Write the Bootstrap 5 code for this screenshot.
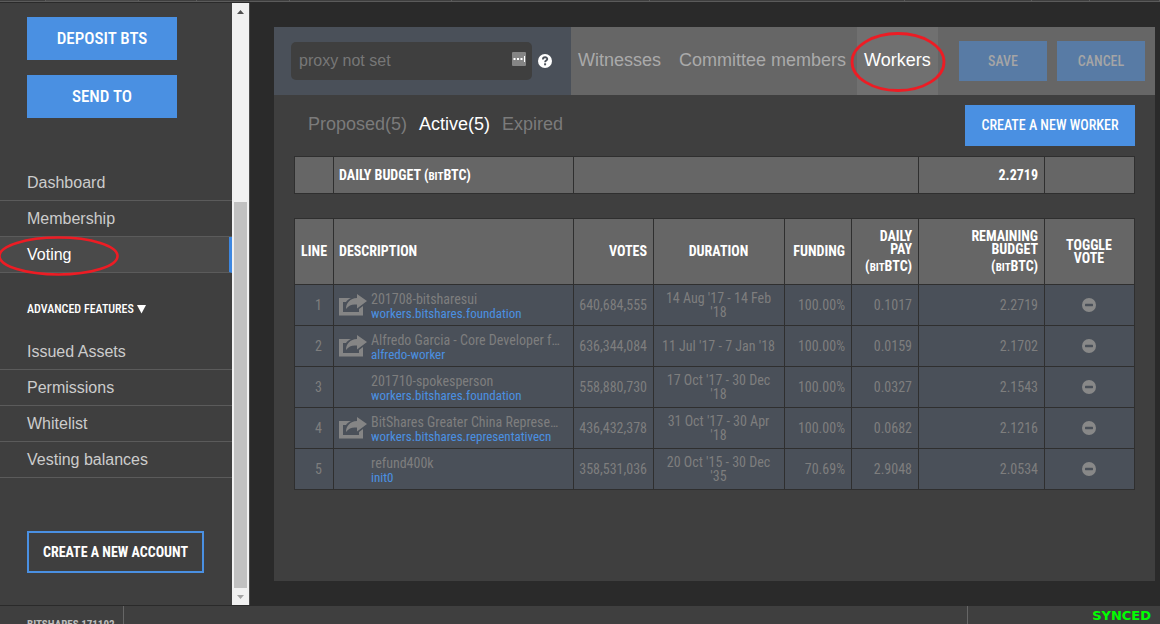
<!DOCTYPE html>
<html lang="en">
<head>
<meta charset="utf-8">
<meta name="viewport" content="width=device-width, initial-scale=1">
<title>BitShares - Voting</title>
<link href="https://cdn.jsdelivr.net/npm/bootstrap@5.3.0/dist/css/bootstrap.min.css" rel="stylesheet">
<style>
:root{--cond:"Roboto Condensed","Liberation Sans Narrow",Roboto,sans-serif;--blue:#4a90e2;--panel:#3f3f3f}
body{background:#2a2a2a;color:#ccc;font-family:"Liberation Sans",Arial,sans-serif;font-size:16px;line-height:20px}
a{text-decoration:none}
.btn{--bs-btn-border-radius:0;--bs-btn-border-width:0;font-family:var(--cond);white-space:nowrap}
.topstrip{height:3px;background:var(--panel);border-bottom:1px solid #2a2a2a}
.topstrip div{border-right:1px solid #5b5b5b;border-bottom:1px solid #5b5b5b}
.topstrip .on{background:#4a4a4a}
.side{width:232px;background:var(--panel)}
.side-actions{gap:15px;padding:14px 27px 47px}
.btn-act{width:150px;height:43px;background:var(--blue);color:#fff;font-size:17px;font-weight:500}
.btn-act:hover{background:#3b82d6;color:#fff}
.sidelink{display:block;height:36px;padding:8px 27px 7px;color:#ccc;border-bottom:1px solid #5b5b5b}
.sidelink.on{background:#4a4a4a;color:#fff;border-right:3px solid #3d87e0}
.advanced{padding:26px 27px 15px}
.btn-adv{color:#fff;font-size:12px;font-weight:500;line-height:20px}
.account{padding:53px 27px 0}
.btn-new{width:177px;height:42px;border:2px solid var(--blue);color:#fff;font-size:14px;font-weight:700;padding:0}
.sbar{width:18px;background:#f1f1f1;border-right:1px solid #4a4a4a}
.sbar .arrow{height:17px}
.sbar .track{flex:8 0 0}
.sbar .thumb{flex:17 0 0;width:13px;background:#c1c1c1}
.stage{padding:24px 5px 24px 24px}
.panel{background:var(--panel)}
.bar{background:#666}
.proxy{width:297px;background:#4a5059;padding:0 19px 0 17px;gap:6px}
.proxy input{height:38px;background:var(--panel);border:0;border-radius:5px;color:#ccc;font-size:16px;padding:0 36px 0 8px}
.proxy input::placeholder{color:#777}
.proxy input:focus{background:var(--panel);color:#ccc}
.pwd{right:6px;top:10px}
.tabs{gap:4px}
.tabs a{padding:23px 7px 25px;font-size:18px;color:#aaa;white-space:nowrap}
.tabs a.on{background:#707070;color:#fff}
.bar-actions{gap:10px;padding-right:10px}
.btn-off{width:88px;height:40px;font-size:14px;font-weight:500}
.btn-off:disabled{background:#587ba5;color:#a5a5a5;opacity:1}
.workers{padding:10px 20px}
.btn-worker{width:170px;height:41px;background:var(--blue);color:#fff;font-size:14px;font-weight:500;padding:0}
.filters{gap:12px;font-size:18px;padding:9px 0 0 14px}
.filters a{color:#7b7b7b}
.filters a.on{color:#fff}
.grid{table-layout:fixed;width:100%;margin-top:10px;border-collapse:collapse;font-family:var(--cond);font-size:14px;line-height:14px}
.grid + .grid{margin-top:24px}
.grid th,.grid td{border:1px solid #2f2f2f;padding:0 6px 0 5px;vertical-align:middle}
.grid th{background:#666;color:#fff;font-weight:700;line-height:13px}
.grid td{background:#4a5059;color:#7e7e7e;height:41px}
.grid td.line{padding-right:11px}
.grid .sum th{height:37px}
.grid .heads th{height:66px}
.c1{width:39px}.c3{width:80px}.c4{width:131px}.c5,.c6{width:67px}.c7{width:126px}.c8{width:90px}.cwide{width:345px}
.unit small{font-size:11px;line-height:1}
div.unit{padding-top:4px}
.ico{width:28px}
.desc a{color:var(--blue);font-size:13px}
.desc-text{padding-top:2px}
.name{line-height:16px}
.toggle{background:none;border:0;padding:0;line-height:0}
.ring{pointer-events:none}
.ring-side{left:-1px;top:-1px}
.ring-tab{left:-7px;top:4px}
.foot{height:18px;margin-top:1px;background:var(--panel);box-shadow:0 -1px #2a2a2a}
.ver{width:124px;padding:9px 0 0 27px;font-family:var(--cond);font-weight:700;font-size:11px;border-right:1px solid #666;color:#bbb;white-space:nowrap}
.sync{width:193px;border-left:1px solid #666;color:#0f0;font-family:"DejaVu Sans",sans-serif;font-size:13px;font-weight:700;padding-right:9px}
</style>
</head>
<body>
<div class="d-flex flex-column vh-100 overflow-hidden">
  <div class="topstrip d-flex flex-shrink-0">
    <div style="width:4%"></div><div class="on" style="width:8%"></div><div style="width:5%"></div><div style="width:8%"></div><div style="width:14%"></div><div style="width:17%"></div><div style="width:22%"></div><div style="width:11%"></div><div style="width:5%"></div><div class="flex-fill"></div>
  </div>
  <div class="d-flex flex-fill overflow-hidden">
    <aside class="side flex-shrink-0 d-flex flex-column overflow-hidden">
      <div class="side-actions d-flex flex-column align-items-start">
        <button class="btn btn-act" type="button">DEPOSIT BTS</button>
        <button class="btn btn-act" type="button">SEND TO</button>
      </div>
      <nav>
        <a class="sidelink" href="#">Dashboard</a>
        <a class="sidelink" href="#">Membership</a>
        <div class="position-relative">
          <a class="sidelink on" href="#">Voting</a>
          <svg class="ring ring-side position-absolute" width="121" height="41" fill="none" stroke="#ed1c24" stroke-width="2.6"><ellipse cx="59.500" cy="20" rx="59" ry="18.500"/></svg>
        </div>
      </nav>
      <div class="advanced"><button class="btn btn-adv p-0 d-flex align-items-center" type="button">ADVANCED FEATURES&nbsp;<svg width="9" height="9" viewBox="0 0 9 9"><path d="M0 0h9L4.500 8.500z" fill="#fff"/></svg></button></div>
      <nav>
        <a class="sidelink" href="#">Issued Assets</a>
        <a class="sidelink" href="#">Permissions</a>
        <a class="sidelink" href="#">Whitelist</a>
        <a class="sidelink" href="#">Vesting balances</a>
      </nav>
      <div class="account"><button class="btn btn-new" type="button">CREATE A NEW ACCOUNT</button></div>
    </aside>
    <div class="sbar flex-shrink-0 d-flex flex-column align-items-center">
      <div class="arrow d-flex align-items-center"><svg width="7" height="4"><path d="M0 4 3.500 0 7 4z" fill="#505050"/></svg></div>
      <div class="track"></div>
      <div class="thumb"></div>
      <div class="arrow d-flex align-items-center"><svg width="7" height="4"><path d="M0 0 3.500 4 7 0z" fill="#a3a3a3"/></svg></div>
    </div>
    <main class="stage flex-fill d-flex">
      <div class="panel flex-fill">
        <div class="bar d-flex align-items-stretch">
          <div class="proxy d-flex align-items-center flex-shrink-0">
            <div class="position-relative flex-fill">
              <input class="form-control shadow-none" type="text" aria-label="Proxy" placeholder="proxy not set">
              <svg class="pwd position-absolute" width="14" height="14"><rect width="14" height="14" rx="1" fill="#858585"/><path d="M1.500 6h2v2h-2zM5 6h2v2H5zM8.500 6h2v2h-2zM12 4h1v6h-1z" fill="#fff"/></svg>
            </div>
            <svg class="flex-shrink-0" width="14" height="14" viewBox="0 0 14 14"><circle cx="7" cy="7" r="7" fill="#fff"/><path d="M4.900 5.500c0-3 4.400-2.900 4.400-.4 0 1.500-2.200 1.500-2.200 3.100" fill="none" stroke="#4a5059" stroke-width="1.800"/><path d="M6.100 9.300h2v2h-2z" fill="#4a5059"/></svg>
          </div>
          <nav class="tabs d-flex">
            <a href="#">Witnesses</a>
            <a href="#">Committee members</a>
            <div class="position-relative d-flex">
              <a class="on" href="#">Workers</a>
              <svg class="ring ring-tab position-absolute" width="96" height="62" fill="none" stroke="#ed1c24" stroke-width="2.800"><ellipse cx="48" cy="31" rx="46" ry="28.500"/></svg>
            </div>
          </nav>
          <div class="bar-actions ms-auto d-flex align-items-center">
            <button class="btn btn-off" type="button" disabled>SAVE</button>
            <button class="btn btn-off" type="button" disabled>CANCEL</button>
          </div>
        </div>
        <div class="workers">
          <div class="d-flex justify-content-between">
            <nav class="filters d-flex"><a href="#">Proposed(5)</a><a class="on" href="#">Active(5)</a><a href="#">Expired</a></nav>
            <button class="btn btn-worker" type="button">CREATE A NEW WORKER</button>
          </div>
          <table class="grid">
            <colgroup><col class="c1"><col><col class="cwide"><col class="c7"><col class="c8"></colgroup>
            <tr class="sum"><th></th><th>DAILY BUDGET <span class="unit">(<small>BIT</small>BTC)</span></th><th></th><th class="text-end">2.2719</th><th></th></tr>
          </table>
          <table class="grid">
            <colgroup><col class="c1"><col><col class="c3"><col class="c4"><col class="c5"><col class="c6"><col class="c7"><col class="c8"></colgroup>
            <thead>
              <tr class="heads"><th class="text-end">LINE</th><th>DESCRIPTION</th><th class="text-end">VOTES</th><th class="text-center">DURATION</th><th class="text-end">FUNDING</th><th class="text-end">DAILY<br>PAY <div class="unit">(<small>BIT</small>BTC)</div></th><th class="text-end">REMAINING<br>BUDGET <div class="unit">(<small>BIT</small>BTC)</div></th><th class="text-center">TOGGLE<br>VOTE</th></tr>
            </thead>
            <tbody id="rows"></tbody>
          </table>
        </div>
      </div>
    </main>
  </div>
  <footer class="foot d-flex flex-shrink-0 overflow-hidden">
    <div class="ver">BITSHARES 171102</div>
    <div class="sync ms-auto text-end">SYNCED</div>
  </footer>
</div>
<script src="https://cdn.jsdelivr.net/npm/bootstrap@5.3.0/dist/js/bootstrap.bundle.min.js"></script>
<script>
const workers = [
  ["201708-bitsharesui","workers.bitshares.foundation",1,"640,684,555","14 Aug '17 - 14 Feb '18","100.00%","0.1017","2.2719"],
  ["Alfredo Garcia - Core Developer f…","alfredo-worker",1,"636,344,084","11 Jul '17 - 7 Jan '18","100.00%","0.0159","2.1702"],
  ["201710-spokesperson","workers.bitshares.foundation",0,"558,880,730","17 Oct '17 - 30 Dec '18","100.00%","0.0327","2.1543"],
  ["BitShares Greater China Represe…","workers.bitshares.representativecn",1,"436,432,378","31 Oct '17 - 30 Apr '18","100.00%","0.0682","2.1216"],
  ["refund400k","init0",0,"358,531,036","20 Oct '15 - 30 Dec '35","70.69%","2.9048","2.0534"]
];
const share = '<a class="d-block" href="#" aria-label="Open worker page"><svg class="d-block" width="28" height="22" viewBox="0 0 28 22" fill="#858585"><path d="M0 4h12c-2 1-4 2.300-5 4H4v10h16v-3l4-3v9.500H0z"/><path d="M18 0l10 7-10 7.500V10.500C13 10 10 11 7 15c0-6 4-10.500 11-11z"/></svg></a>';
document.getElementById("rows").innerHTML = workers.map((w, i) => `
  <tr><td class="line text-end">${i + 1}</td>
  <td><div class="d-flex align-items-center desc"><div class="ico flex-shrink-0 me-1">${w[2] ? share : ""}</div>
  <div class="desc-text overflow-hidden"><div class="name text-truncate">${w[0]}</div><a class="d-block" href="#">${w[1]}</a></div></div></td>
  <td class="text-end">${w[3]}</td><td class="text-center">${w[4]}</td><td class="text-end">${w[5]}</td><td class="text-end">${w[6]}</td><td class="text-end">${w[7]}</td>
  <td class="text-center"><button class="toggle d-block mx-auto" type="button" aria-label="Toggle vote"><svg width="14" height="14"><circle cx="7" cy="7" r="7" fill="#888"/><rect x="3" y="5.800" width="8" height="2.400" rx=".6" fill="#4a5059"/></svg></button></td></tr>`).join("");
</script>
</body>
</html>
